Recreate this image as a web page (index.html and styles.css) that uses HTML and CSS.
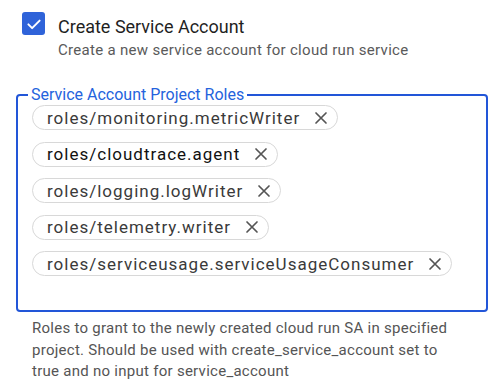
FILE: index.html
```html
<!DOCTYPE html>
<html lang="en">
<head>
    <meta charset="UTF-8">
    <meta name="viewport" content="width=device-width, initial-scale=1.0">
    <title>Service Account</title>
    <link rel="stylesheet" href="styles.css">
</head>
<body>
    <div class="panel">
        <div class="check-row">
            <span class="checkbox">
                <svg viewBox="0 0 24 24" width="18" height="18"><path d="M4.5 12.5l5 5 10-10" fill="none" stroke="#fff" stroke-width="2.6" stroke-linecap="round" stroke-linejoin="round"/></svg>
            </span>
            <div class="check-text">
                <div class="check-title">Create Service Account</div>
                <div class="check-sub">Create a new service account for cloud run service</div>
            </div>
        </div>

        <fieldset class="roles">
            <legend class="roles-label">Service Account Project Roles</legend>
            <div class="chips">
                <span class="chip">roles/monitoring.metricWriter<svg class="chip-x" viewBox="0 0 14 14" width="14" height="14"><path d="M2 2l10 10M12 2L2 12" stroke="#555" stroke-width="1.7" stroke-linecap="round"/></svg></span>
                <span class="chip active">roles/cloudtrace.agent<svg class="chip-x" viewBox="0 0 14 14" width="14" height="14"><path d="M2 2l10 10M12 2L2 12" stroke="#555" stroke-width="1.7" stroke-linecap="round"/></svg></span>
                <span class="chip">roles/logging.logWriter<svg class="chip-x" viewBox="0 0 14 14" width="14" height="14"><path d="M2 2l10 10M12 2L2 12" stroke="#555" stroke-width="1.7" stroke-linecap="round"/></svg></span>
                <span class="chip">roles/telemetry.writer<svg class="chip-x" viewBox="0 0 14 14" width="14" height="14"><path d="M2 2l10 10M12 2L2 12" stroke="#555" stroke-width="1.7" stroke-linecap="round"/></svg></span>
                <span class="chip">roles/serviceusage.serviceUsageConsumer<svg class="chip-x" viewBox="0 0 14 14" width="14" height="14"><path d="M2 2l10 10M12 2L2 12" stroke="#555" stroke-width="1.7" stroke-linecap="round"/></svg></span>
            </div>
        </fieldset>

        <p class="help">Roles to grant to the newly created cloud run SA in specified project. Should be used with create_service_account set to true and no input for service_account</p>
    </div>
</body>
</html>
```

FILE: styles.css
```css
body {
    margin: 0;
    background: #fff;
    font-family: Roboto, "Liberation Sans", Arial, sans-serif;
    color: #222;
}

.panel {
    padding: 12px 12px 0 16px;
}

.check-row {
    display: flex;
    align-items: flex-start;
    padding-left: 6px;
}

.checkbox {
    width: 23px;
    height: 23px;
    border-radius: 3px;
    background: #2f63d9;
    display: flex;
    align-items: center;
    justify-content: center;
    flex-shrink: 0;
}

.check-text {
    margin-left: 13px;
}

.check-title {
    font-size: 18px;
    line-height: 24px;
    margin-top: 3px;
    color: #1f1f1f;
}

.check-sub {
    font-size: 15px;
    letter-spacing: 0.3px;
    line-height: 20px;
    color: #5a5a5a;
    margin-top: 1px;
}

.roles {
    margin: 26px 0 0 0;
    width: 472px;
    box-sizing: border-box;
    border: 2px solid #2256d8;
    border-radius: 4px;
    padding: 1px 14px 34px 14px;
}

.roles-label {
    font-size: 16px;
    line-height: 18px;
    color: #2463dd;
    padding: 0 3px;
    margin-left: -4px;
}

.chips {
    display: flex;
    flex-direction: column;
    align-items: flex-start;
    gap: 11.6px;
}

.chip {
    display: inline-flex;
    align-items: center;
    height: 25px;
    box-sizing: border-box;
    border: 1px solid #d8d8d8;
    border-radius: 13px;
    padding: 0 9px 0 14px;
    font-size: 17px;
    letter-spacing: 1px;
    color: #3a3a3a;
    background: #fff;
}

.chip.active {
    color: #111;
}

.chip-x {
    margin-left: 14px;
}

.help {
    margin: 6px 0 0 16px;
    width: 425px;
    font-size: 15px;
    letter-spacing: 0.27px;
    line-height: 21.5px;
    color: #555;
}
```
